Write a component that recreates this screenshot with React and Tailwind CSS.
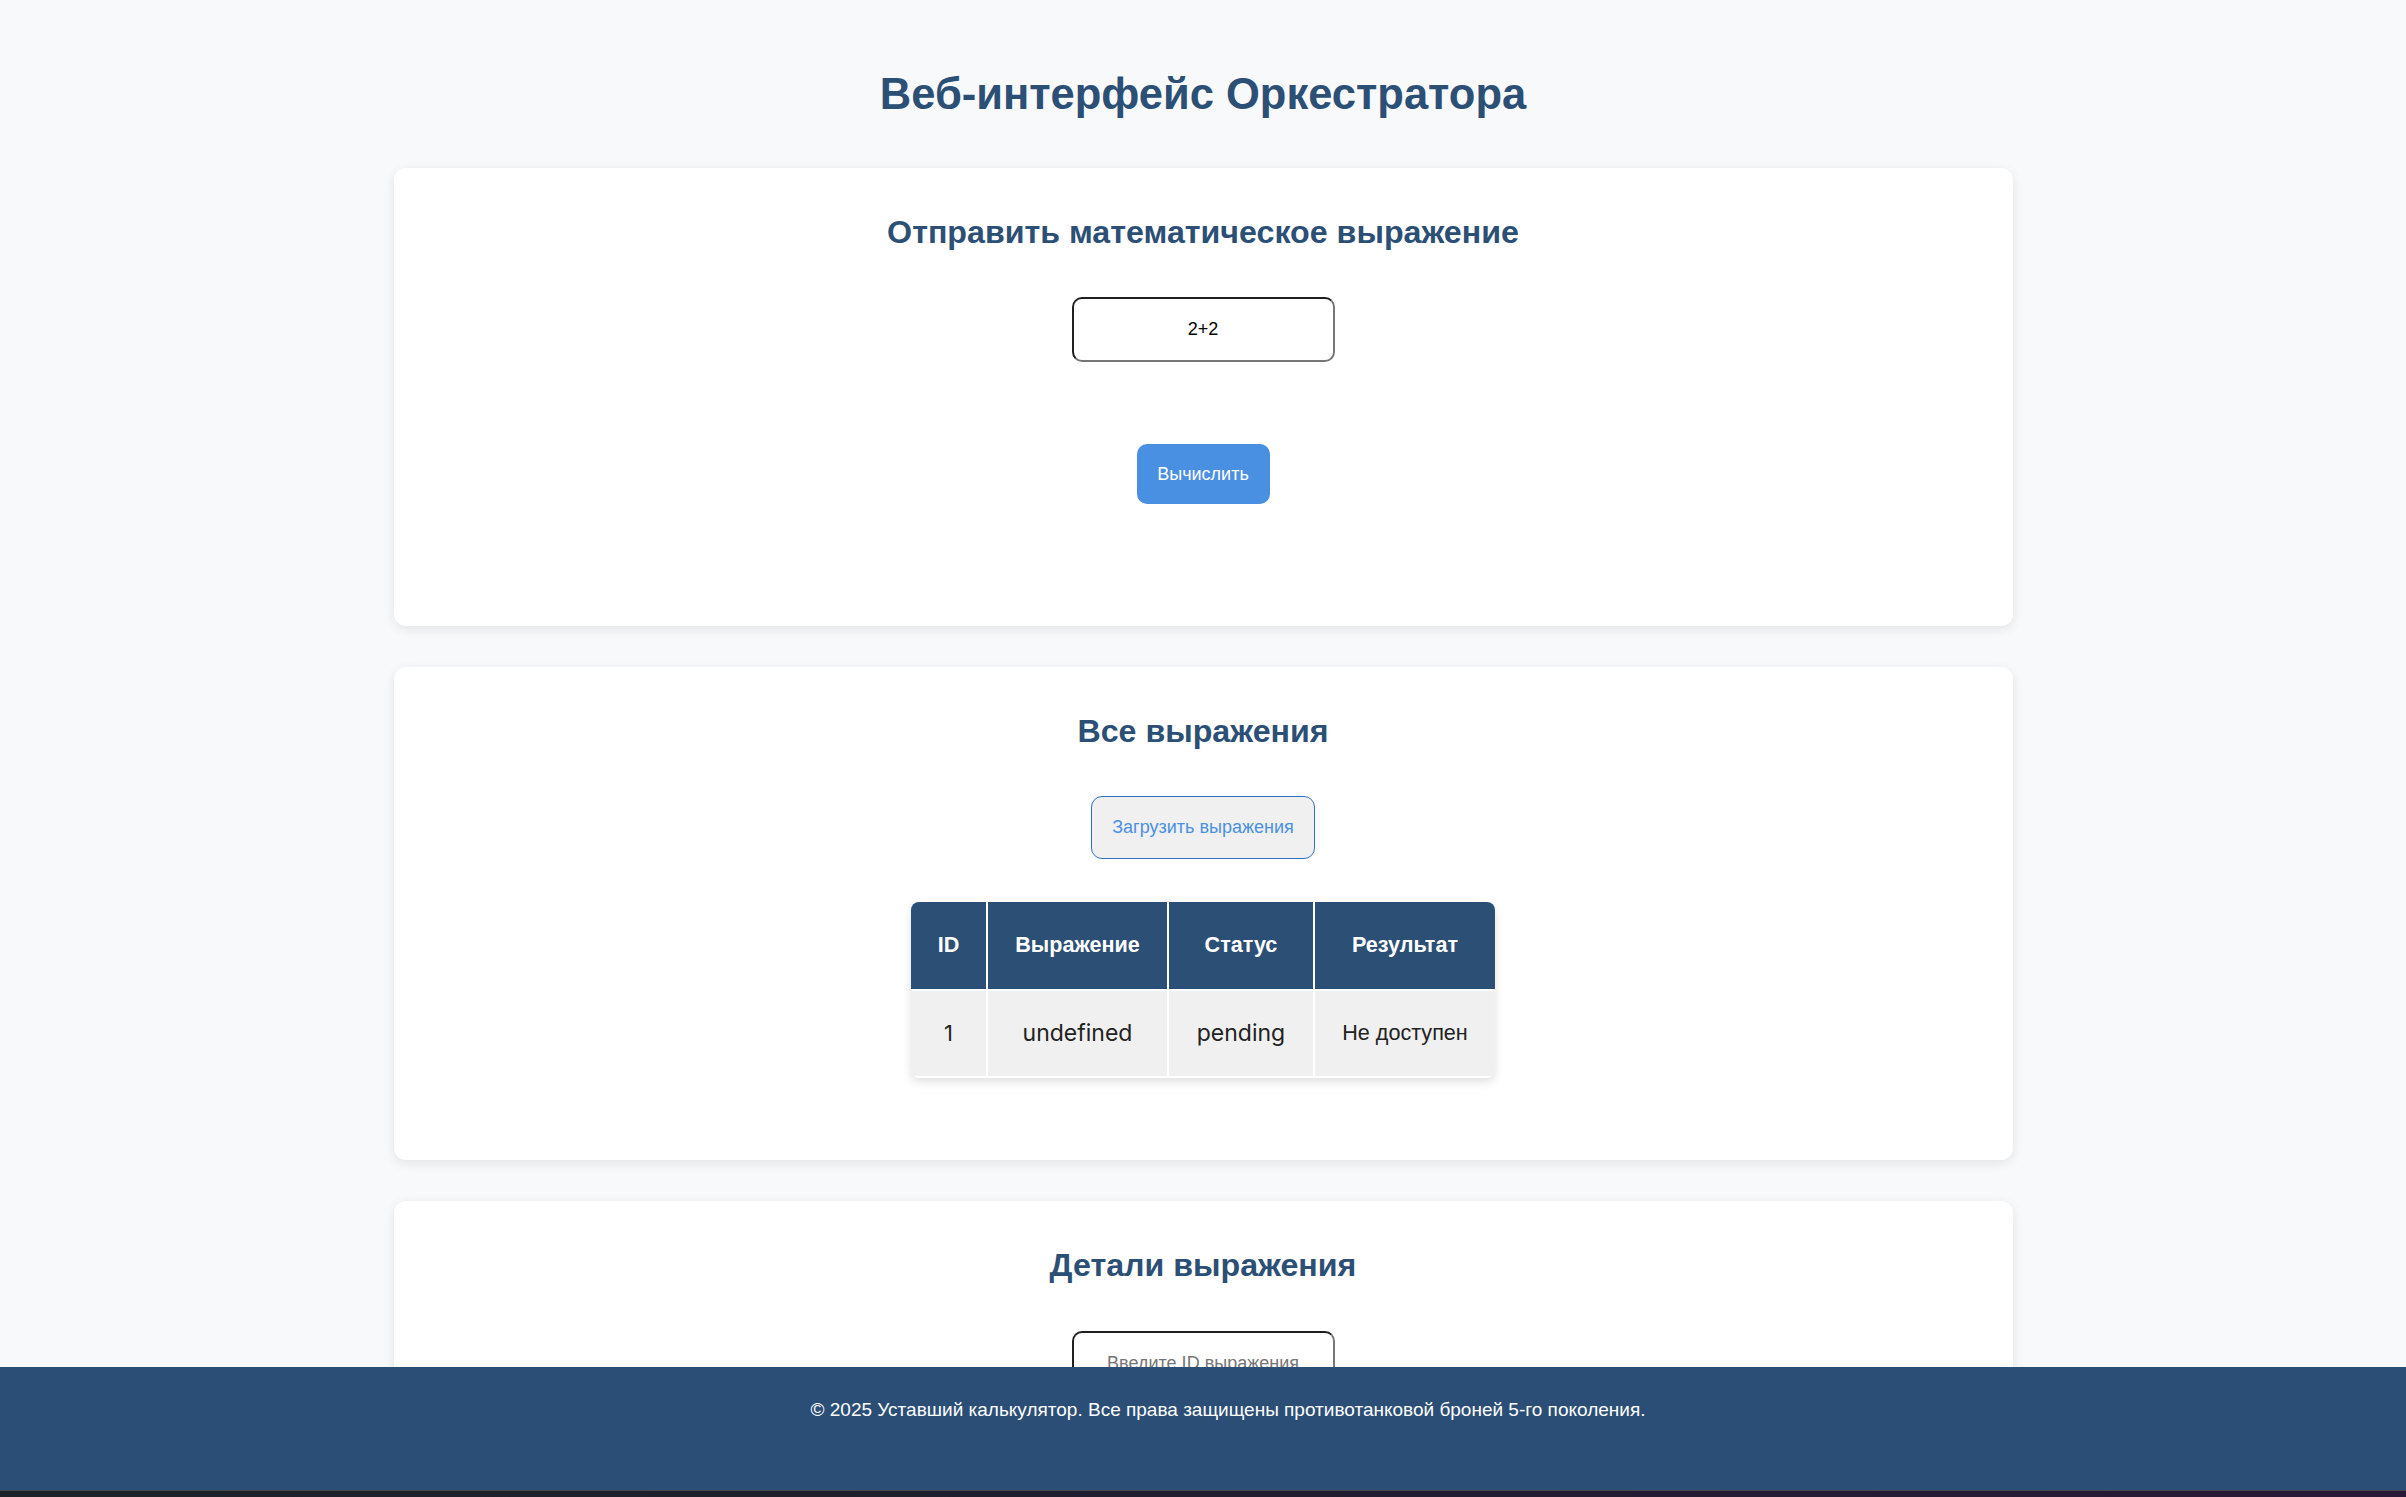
import { useState } from 'react'

const ARIAL = "font-['Liberation_Sans',Arial,sans-serif]"

const COLS = [
  { key: 'id', label: 'ID', w: 'w-[75px]' },
  { key: 'expression', label: 'Выражение', w: 'w-[179px]' },
  { key: 'status', label: 'Статус', w: 'w-[144px]' },
  { key: 'result', label: 'Результат', w: 'w-[180px]' },
]

const ROWS = [
  { id: '1', expression: 'undefined', status: 'pending', result: null },
]

function Card({ title, children, className = '' }) {
  return (
    <section className={`mx-auto w-[1619px] rounded-xl bg-white pt-[46px] shadow-[0_3px_12px_rgba(0,0,0,0.09)] ${className}`}>
      <h2 className="text-center text-[32.2px] font-bold leading-[37px] text-[#2c4f76]">{title}</h2>
      {children}
    </section>
  )
}

function TextInput({ value, placeholder, onChange }) {
  return (
    <input
      type="text"
      value={value}
      placeholder={placeholder}
      onChange={(e) => onChange(e.target.value)}
      className={`${ARIAL} block h-[65px] w-[263px] rounded-[10px] border-2 border-t-[#1f1f1f] border-l-[#1f1f1f] border-r-[#767676] border-b-[#767676] bg-white text-center text-[18px] text-black outline-none placeholder:text-[#757575]`}
    />
  )
}

export default function App() {
  const [expr, setExpr] = useState('2+2')
  const [lookupId, setLookupId] = useState('')

  return (
    <div className={`${ARIAL} flex h-screen flex-col overflow-hidden bg-[#f8f9fa]`}>
      <main className="min-h-0 flex-1 overflow-hidden pt-[70px]">
        <h1 className="text-center text-[43.5px] font-bold leading-[49px] text-[#2c4f76]">
          Веб-интерфейс Оркестратора
        </h1>

        <div className="mt-[49px] flex flex-col gap-[41px]">
          {/* submit */}
          <Card title="Отправить математическое выражение" className="h-[458px]">
            <div className="mt-[46px] flex flex-col items-center">
              <TextInput value={expr} onChange={setExpr} />
              <button
                type="button"
                className="mt-[82px] h-[60px] w-[133px] rounded-[10px] bg-[#4a90e2] text-[18px] text-white"
              >
                Вычислить
              </button>
            </div>
          </Card>

          {/* list */}
          <Card title="Все выражения" className="h-[493px]">
            <div className="mt-[46px] flex flex-col items-center">
              <button
                type="button"
                className="h-[63px] w-[224px] rounded-[11px] border border-[#2f74c4] bg-[#f0f0f0] text-[18px] text-[#4a90e2]"
              >
                Загрузить выражения
              </button>

              <div className="mt-[43px] overflow-hidden rounded-lg bg-white shadow-[0_4px_10px_rgba(0,0,0,0.12)]">
                <div className="flex gap-[2px]">
                  {COLS.map((c) => (
                    <div
                      key={c.key}
                      className={`${c.w} flex h-[87px] items-center justify-center bg-[#2c4f76] text-[21.6px] font-bold text-white`}
                    >
                      {c.label}
                    </div>
                  ))}
                </div>
                {ROWS.map((r) => (
                  <div key={r.id} className="mt-[2px] flex gap-[2px] pb-[2px]">
                    <div className="flex h-[85px] w-[75px] items-center justify-center bg-[#f0f0f0] font-['Inter',sans-serif] text-[22px] text-[#222]">
                      {r.id}
                    </div>
                    <div className="flex h-[85px] w-[179px] items-center justify-center bg-[#f0f0f0] font-['Inter',sans-serif] text-[23px] text-[#222]">
                      {r.expression}
                    </div>
                    <div className="flex h-[85px] w-[144px] items-center justify-center bg-[#f0f0f0] font-['Inter',sans-serif] text-[23px] text-[#222]">
                      {r.status}
                    </div>
                    <div className="flex h-[85px] w-[180px] items-center justify-center bg-[#f0f0f0] text-[21.6px] text-[#222]">
                      {r.result ?? 'Не доступен'}
                    </div>
                  </div>
                ))}
              </div>
            </div>
          </Card>

          {/* details */}
          <Card title="Детали выражения" className="h-[400px]">
            <div className="mt-[47px] flex flex-col items-center">
              <TextInput value={lookupId} placeholder="Введите ID выражения" onChange={setLookupId} />
            </div>
          </Card>
        </div>
      </main>

      <footer className="h-[123px] shrink-0 bg-[#2b4e76] pl-[50px] pt-[32px] text-center text-[19px] leading-[22px] text-white">
        © 2025 Уставший калькулятор. Все права защищены противотанковой броней 5-го поколения.
      </footer>
      <div className="h-[7px] shrink-0 border-t border-[#45484d] bg-gradient-to-r from-[#1d2228] via-[#1f1d30] to-[#2a1838]" />
    </div>
  )
}
